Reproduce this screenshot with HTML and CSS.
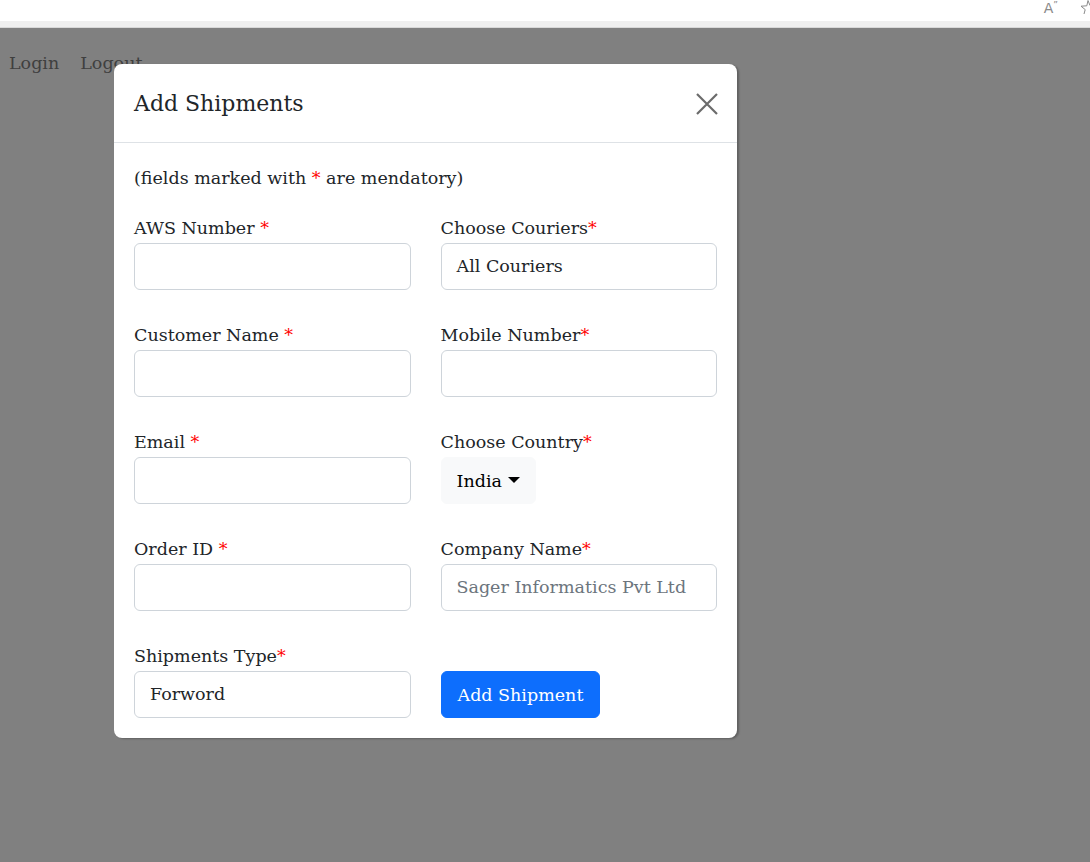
FILE: index.html
```html
<!DOCTYPE html>
<html>
<head>
<meta charset="utf-8">
<link rel="stylesheet" href="styles.css">
</head>
<body>
<div class="chrome">
  <span class="chrome-icon">A<span class="sup">&#8221;</span></span>
  <svg class="star" width="10" height="14" viewBox="0 0 10 14"><path d="M8 0.5L10 5.5M8 0.5L6.8 5.8L1 6.2L5.2 9.6L4 14" stroke="#8a8a8a" stroke-width="1" fill="none"/></svg>
</div>
<div class="page">
  <nav class="nav">
    <a class="nav-link">Login</a>
    <a class="nav-link">Logout</a>
  </nav>
  <div class="modal">
    <div class="modal-header">
      <h5 class="modal-title">Add Shipments</h5>
      <button class="btn-close" aria-label="Close">
        <svg width="22" height="22" viewBox="0 0 22 22"><path d="M1 1L21 21M21 1L1 21" stroke="#6b6b6b" stroke-width="2.2" fill="none"/></svg>
      </button>
    </div>
    <div class="modal-body">
      <p class="note">(fields marked with <span class="req">*</span> are mendatory)</p>
      <div class="grid">
        <div class="field">
          <label class="label">AWS Number <span class="req">*</span></label>
          <input class="input" type="text">
        </div>
        <div class="field">
          <label class="label">Choose Couriers<span class="req">*</span></label>
          <div class="input">All Couriers</div>
        </div>
        <div class="field">
          <label class="label">Customer Name <span class="req">*</span></label>
          <input class="input" type="text">
        </div>
        <div class="field">
          <label class="label">Mobile Number<span class="req">*</span></label>
          <input class="input" type="text">
        </div>
        <div class="field">
          <label class="label">Email <span class="req">*</span></label>
          <input class="input" type="text">
        </div>
        <div class="field">
          <label class="label">Choose Country<span class="req">*</span></label>
          <div><button class="dropdown">India <span class="caret"></span></button></div>
        </div>
        <div class="field">
          <label class="label">Order ID <span class="req">*</span></label>
          <input class="input" type="text">
        </div>
        <div class="field">
          <label class="label">Company Name<span class="req">*</span></label>
          <div class="input placeholder">Sager Informatics Pvt Ltd</div>
        </div>
        <div class="field">
          <label class="label">Shipments Type<span class="req">*</span></label>
          <div class="input">Forword</div>
        </div>
        <div class="field field-end">
          <div><button class="btn-primary">Add Shipment</button></div>
        </div>
      </div>
    </div>
  </div>
</div>
</body>
</html>
```
FILE: styles.css
```css
* { box-sizing: border-box; }
html, body { margin: 0; padding: 0; }
body {
  width: 1090px;
  height: 862px;
  overflow: hidden;
  background: #808080;
  font-family: "DejaVu Serif", serif;
  color: #212529;
}
.chrome {
  height: 27px;
  background: #ffffff;
  border-bottom: 6px solid #efefef;
  box-shadow: 0 1px 0 #d8d8d8;
  display: flex;
  justify-content: flex-end;
  align-items: flex-start;
  gap: 22px;
  overflow: hidden;
}
.chrome-icon {
  font-family: "DejaVu Sans", sans-serif;
  font-size: 14px;
  line-height: 16px;
  color: #8a8a8a;
  display: flex;
}
.chrome-icon .sup { font-size: 9px; line-height: 10px; }
.star { display: block; }
.page {
  position: relative;
  height: 835px;
}
.nav {
  display: flex;
  gap: 21px;
  padding: 21px 9px 0;
}
.nav-link {
  font-size: 17.5px;
  line-height: 30px;
  color: #3f3f3f;
}
.modal {
  position: absolute;
  left: 114px;
  top: 37px;
  width: 623px;
  background: #fff;
  border-radius: 8px;
  box-shadow: 2px 1px 2px rgba(0,0,0,0.25);
}
.modal-header {
  height: 79px;
  border-bottom: 1px solid #dee2e6;
  display: flex;
  align-items: center;
  justify-content: space-between;
  padding: 2px 19px 0 20px;
}
.modal-title {
  margin: 0;
  font-size: 22px;
  font-weight: 400;
  line-height: 30px;
}
.btn-close {
  border: 0;
  background: none;
  padding: 0;
  width: 22px;
  height: 22px;
  display: flex;
}
.modal-body {
  padding: 20px;
}
.note {
  margin: 0 0 20px;
  font-size: 17.5px;
  line-height: 30px;
}
.req { color: #ff0000; }
.grid {
  display: grid;
  grid-template-columns: 1fr 1fr;
  column-gap: 30px;
  row-gap: 30px;
}
.field {
  display: flex;
  flex-direction: column;
}
.field-end { justify-content: flex-end; }
.label {
  font-size: 17.5px;
  line-height: 30px;
}
.input {
  height: 47px;
  border: 1px solid #ced4da;
  border-radius: 6px;
  padding: 0 15px;
  font-family: inherit;
  font-size: 17.5px;
  line-height: 45px;
  color: #212529;
  background: #fff;
  width: 100%;
  outline: none;
}
.placeholder { color: #6c757d; }
.dropdown {
  height: 47px;
  border: 1px solid #f8f9fa;
  background: #f8f9fa;
  border-radius: 6px;
  padding: 0 15px;
  font-family: inherit;
  font-size: 17.5px;
  color: #000;
  display: inline-flex;
  align-items: center;
  gap: 6px;
}
.caret {
  width: 0;
  height: 0;
  border-left: 6px solid transparent;
  border-right: 6px solid transparent;
  border-top: 6px solid #000;
  margin-top: -2px;
}
.btn-primary {
  height: 47px;
  border: 1px solid #0d6efd;
  background: #0d6efd;
  color: #fff;
  border-radius: 6px;
  padding: 0 16px;
  font-family: inherit;
  font-size: 17.5px;
}
```
